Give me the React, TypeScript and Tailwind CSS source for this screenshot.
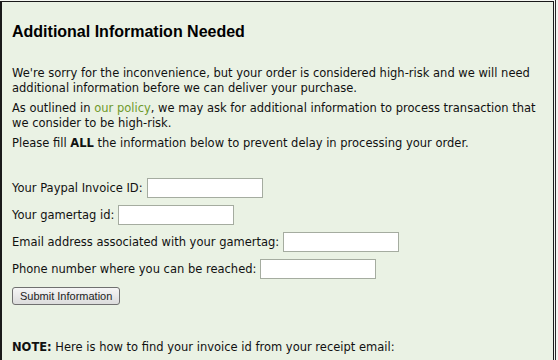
import React from 'react';

const fields = [
    { label: 'Your Paypal Invoice ID:' },
    { label: 'Your gamertag id:' },
    { label: 'Email address associated with your gamertag:' },
    { label: 'Phone number where you can be reached:' },
];

export default function App() {
    return (
        <div className="w-[558px] h-[360px] overflow-hidden bg-[#f4f6f1] flex">
            <div className="flex-1 mt-px border-l-2 border-t border-r border-[#1a1a1a] bg-[#eaf2e4] pl-[10px] pr-3 text-[11.5px] leading-[15px] text-[#111] font-['DejaVu_Sans',Verdana,sans-serif]">
                <h2 className="mt-[20px] mb-[24px] text-[16px] font-bold font-['Liberation_Sans',Arial,sans-serif] leading-5 text-black">
                    Additional Information Needed
                </h2>
                <p>
                    We're sorry for the inconvenience, but your order is considered high-risk and we will need additional information before we can deliver your purchase.
                </p>
                <p className="mt-[5px]">
                    As outlined in <a className="text-[#6f9a2c]">our policy</a>, we may ask for additional information to process transaction that we consider to be high-risk.
                </p>
                <p className="mt-[5px]">
                    Please fill <b>ALL</b> the information below to prevent delay in processing your order.
                </p>

                <div className="mt-[27px] flex flex-col gap-[7px]">
                    {fields.map((f, i) => (
                        <div key={i} className="flex items-center gap-[4px]">
                            <span>{f.label}</span>
                            <input className="w-[116px] h-[20px] bg-white border border-[#a5aca0] outline-none" />
                        </div>
                    ))}
                </div>

                <button className="mt-[8px] h-[18px] px-[7px] rounded-[3px] border border-[#707070] bg-gradient-to-b from-[#f6f6f6] to-[#dcdcdc] text-[11px] leading-[14px] text-[#222] font-['Liberation_Sans',Arial,sans-serif]">
                    Submit Information
                </button>

                <p className="mt-[35px]">
                    <b>NOTE:</b> Here is how to find your invoice id from your receipt email:
                </p>
            </div>
            <div className="w-[3px] ml-px bg-[#f4f6f1] border-l border-[#2a2a2a]" />
        </div>
    );
}
